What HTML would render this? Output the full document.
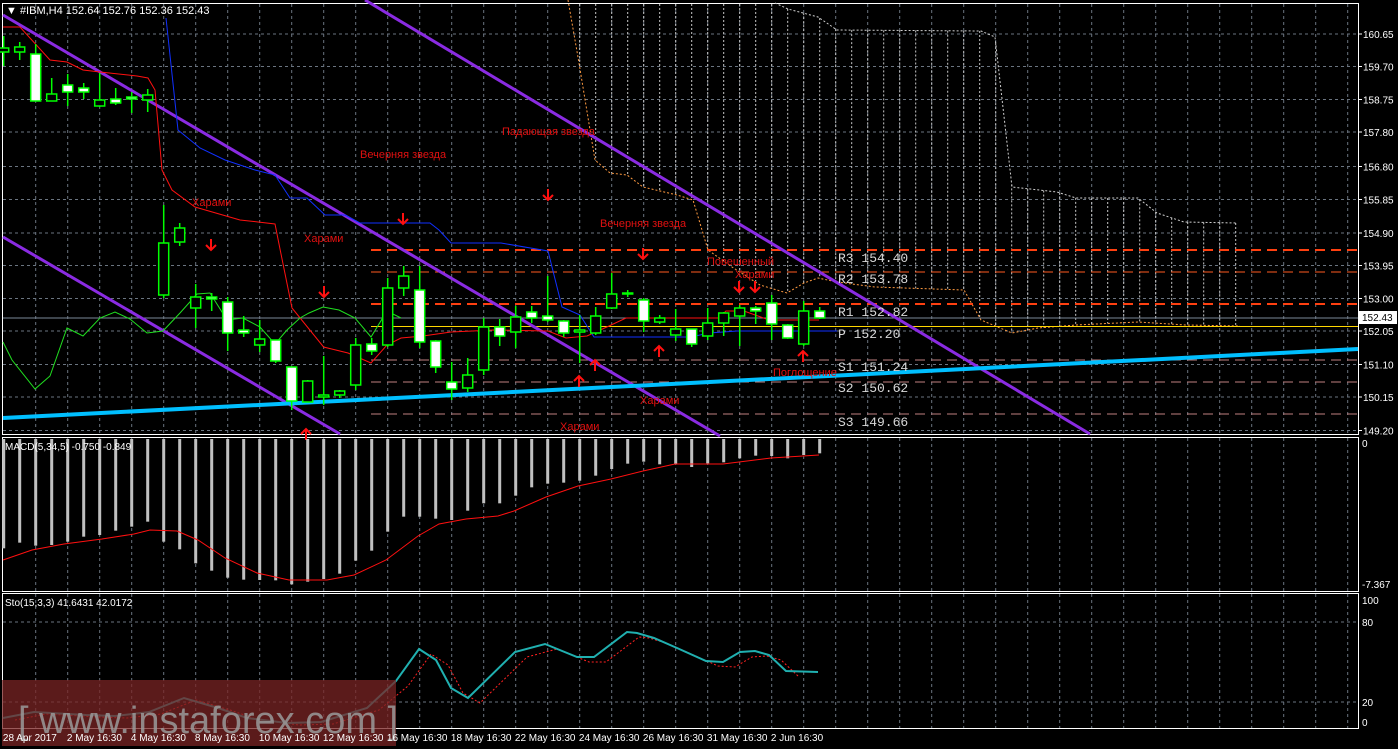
<!DOCTYPE html>
<html><head><meta charset="utf-8"><style>
html,body{margin:0;padding:0;background:#000;width:1398px;height:749px;overflow:hidden}
svg{display:block}
text{font-family:"Liberation Sans","DejaVu Sans",sans-serif}
text.mono{font-family:"Liberation Mono","DejaVu Sans Mono",monospace}
</style></head><body>
<svg id="s" width="1398" height="749" xmlns="http://www.w3.org/2000/svg">
<rect width="1398" height="749" fill="#000"/>
<g id="grid"></g>
<g id="cloud"></g>
<g id="lines"></g>
<g id="candles"></g>
<g id="marks"></g>
<g font-size="11" fill="#e01010">
<text x="360" y="158">Вечерняя звезда</text>
<text x="192" y="206">Харами</text>
<text x="304" y="242">Харами</text>
<text x="502" y="135">Падающая звезда</text>
<text x="600" y="227">Вечерняя звезда</text>
<text x="707" y="265">Повешенный</text>
<text x="735" y="278">Харами</text>
<text x="773" y="376">Поглощение</text>
<text x="640" y="404">Харами</text>
<text x="560" y="430">Харами</text>
</g>
<g font-size="13" fill="#d8d8d8">
<text class="mono" x="838" y="262">R3  154.40</text>
<text class="mono" x="838" y="283">R2  153.78</text>
<text class="mono" x="838" y="316">R1  152.82</text>
<text class="mono" x="838" y="338">P  152.20</text>
<text class="mono" x="838" y="371">S1  151.24</text>
<text class="mono" x="838" y="392">S2  150.62</text>
<text class="mono" x="838" y="426">S3  149.66</text>
</g>
<g font-size="11" fill="#fff">
<text x="6" y="14">▼ #IBM,H4  152.64 152.76 152.36 152.43</text>
<text x="5" y="450" font-size="10">MACD(5,34,5) -0.750 -0.849</text>
<text x="5" y="606" font-size="10">Sto(15,3,3) 41.6431 42.0172</text>
</g>
<g id="axis" font-size="10" fill="#fff"></g>
<rect x="2" y="680" width="394" height="66" fill="#7a2424" fill-opacity="0.75"/>
<text x="18" y="733" font-size="38" fill="#9a9a9a" fill-opacity="0.85">[ www.instaforex.com ]</text>
<g id="dates" font-size="10" fill="#fff"></g>
</svg>
<script>
const NS="http://www.w3.org/2000/svg";
function el(p,t,a){const e=document.createElementNS(NS,t);for(const k in a)e.setAttribute(k,a[k]);document.getElementById(p).appendChild(e);return e;}
const R=1358;
el('grid','rect',{x:2.5,y:3.5,width:R-2,height:431,fill:'none',stroke:'#fff'});
el('grid','line',{x1:2,y1:437.5,x2:R,y2:437.5,stroke:'#fff'});
el('grid','rect',{x:2.5,y:437.5,width:R-2,height:154,fill:'none',stroke:'#fff'});
el('grid','rect',{x:2.5,y:593.5,width:R-2,height:135,fill:'none',stroke:'#fff'});
const gs={stroke:'#6a7480','stroke-dasharray':'3,3'};
const py=[34,66.5,99.5,132,166.5,199.5,233,265.5,298.5,331,364.5,397,430.5];
const pl=['160.65','159.70','158.75','157.80','156.80','155.85','154.90','153.95','153.00','152.05','151.10','150.15','149.20'];
py.forEach((y,i)=>{el('grid','line',Object.assign({x1:3,y1:y,x2:R,y2:y},gs));
 el('axis','line',{x1:R,y1:y,x2:R+4,y2:y,stroke:'#fff'});
 const t=el('axis','text',{x:R+5,y:y+4});t.textContent=pl[i];});
for(let x=35.7;x<R;x+=32){el('grid','line',Object.assign({x1:x,y1:4,x2:x,y2:434},gs));
 el('grid','line',Object.assign({x1:x,y1:438,x2:x,y2:591},gs));
 el('grid','line',Object.assign({x1:x,y1:594,x2:x,y2:728},gs));}
[622,702].forEach(y=>el('grid','line',Object.assign({x1:3,y1:y,x2:R,y2:y},gs)));
[['0',447],['-7.367',588],['100',604],['80',626],['20',706],['0',726]].forEach(a=>{const t=el('axis','text',{x:R+4,y:a[1]});t.textContent=a[0];});
el('axis','rect',{x:R+1,y:311,width:38,height:13,fill:'#fff'});
const pt=el('axis','text',{x:R+4,y:321,fill:'#000'});pt.textContent='152.43';
['28 Apr 2017','2 May 16:30','4 May 16:30','8 May 16:30','10 May 16:30','12 May 16:30','16 May 16:30','18 May 16:30','22 May 16:30','24 May 16:30','26 May 16:30','31 May 16:30','2 Jun 16:30'].forEach((d,i)=>{const t=el('dates','text',{x:2.9+64*i,y:741});t.textContent=d;});
function interp(P,x){for(let i=0;i<P.length-1;i++){if(x>=P[i][0]&&x<=P[i+1][0]){const f=(x-P[i][0])/(P[i+1][0]-P[i][0]);return P[i][1]+f*(P[i+1][1]-P[i][1]);}}return null;}
const org=[[568,0],[579,63],[595,160],[610,173],[627,175],[643,187],[677,195],[693,200],[708,250],[732,267],[760,285],[787,293],[804,283],[818,278],[837,282],[875,287],[964,290],[981,320],[1012,333],[1038,328],[1076,325],[1138,322],[1186,325],[1240,326]];
const wht=[[775,3],[788,9],[818,17],[837,30],[981,31],[995,37],[1012,187],[1057,192],[1076,198],[1138,198],[1157,213],[1184,222],[1237,223],[1237,326]];
for(let x=3.7+16*36;x<=1237;x+=16){const b=interp(org,x);let t=interp(wht,x);if(t===null)t=4;if(b!==null&&b>t)el('cloud','line',{x1:x,y1:t,x2:x,y2:b,stroke:'#c8c8c8','stroke-dasharray':'2,2'});}
function pl2(p,P,a){el(p,'polyline',Object.assign({points:P.map(q=>q.join(',')).join(' '),fill:'none'},a));}
pl2('cloud',org,{stroke:'#ff9a40','stroke-dasharray':'2,2'});
pl2('cloud',wht.slice(0,-1),{stroke:'#d0d0d0','stroke-dasharray':'2,2'});
const L=(y,c,w,d)=>el('lines','line',{x1:371,y1:y,x2:R,y2:y,stroke:c,'stroke-width':w,'stroke-dasharray':d});
L(250,'#ff4010',2,'10,6');L(272,'#ff5a20',1,'10,6');L(304,'#ff4010',2,'10,6');
L(360,'#c08080',1,'10,6');L(382,'#c08080',1,'10,6');L(414,'#c08080',1,'10,6');
el('lines','line',{x1:3,y1:318,x2:R,y2:318,stroke:'#7a8898'});
el('lines','line',{x1:371,y1:326.5,x2:R,y2:326.5,stroke:'#ffd700'});
el('lines','line',{x1:3,y1:15,x2:720,y2:436,stroke:'#8a2be2','stroke-width':3});
el('lines','line',{x1:365,y1:0,x2:1090,y2:434,stroke:'#8a2be2','stroke-width':3});
el('lines','line',{x1:3,y1:237,x2:340,y2:434,stroke:'#8a2be2','stroke-width':3});
el('lines','line',{x1:3,y1:418,x2:R,y2:349,stroke:'#00bfff','stroke-width':4});
pl2('lines',[[3,27],[20,27],[50,60],[67,62],[83,70],[100,72],[137,76],[148,78],[155,90],[162,170],[172,190],[195,207],[240,220],[258,222],[275,224],[280,249],[292,308],[323.6,347],[348,353],[371,363],[387,345],[401,338],[423,336],[451,332],[494,330],[548,331],[566,338],[587,336],[609,326],[626,318],[719,318],[726,311],[744,311],[769,320],[819,320]],{stroke:'#ff1010'});
pl2('lines',[[166,18],[178,130],[200,148],[225,160],[255,170],[275,175],[290,198],[307,198],[325,215],[345,215],[360,223],[430,223],[439,230],[451,243],[501,243],[548,251],[562,307],[580,315],[594,337],[691,337],[709,333],[737,331],[837,331]],{stroke:'#1030ff'});
pl2('lines',[[3,342],[12,360],[35,389],[50,376],[67,328],[83,336],[100,318],[115,312],[130,319],[147,333],[163,331],[180,313],[197,294],[210,293],[227,320],[243,318],[260,327],[275,344],[287,330],[300,318],[309,313],[323,307],[339,310],[355,318],[371,337],[387,311],[401,318]],{stroke:'#20e020'});
const C=[[48,52,36,66,0],[47,52,42,60,0],[54,101,44,101,1],[94,101,78,101,0],[85,92,74,106,1],[88,92,83,99,1],[100,106,73,107,0],[99,103,88,105,1],[97,99,92,113,1],[95,100,89,112,0],[243,295,205,298,0],[228,242,223,246,0],[297,308,284,328,0],[297,299,293,311,1],[302,333,297,351,1],[330,333,316,337,1],[339,345,320,352,0],[340,361,340,363,1],[367,401,367,410,1],[381,402,380,402,0],[395,397,356,405,0],[391,395,390,398,0],[345,385,338,390,0],[344,351,338,355,1],[288,345,278,347,0],[276,288,266,296,0],[290,342,266,348,1],[341,367,340,373,1],[382,389,362,400,1],[375,388,358,392,0],[327,370,318,375,0],[327,336,319,346,1],[317,332,306,348,0],[312,318,306,323,1],[316,320,276,322,1],[321,333,320,337,1],[330,332,315,363,0],[316,333,307,335,0],[294,308,273,309,0],[293,294,290,297,0],[300,321,298,332,1],[318,322,315,324,0],[329,335,309,341,0],[329,344,329,347,1],[323,336,308,340,0],[313,323,312,336,0],[308,316,305,346,0],[308,311,306,324,1],[303,324,295,340,1],[325,338,324,339,1],[311,344,301,346,0],[311,318,307,319,1]];
C.forEach((c,i)=>{const x=3.7+16*i;
 el('candles','line',{x1:x,y1:c[2],x2:x,y2:c[3],stroke:'#00ff00','stroke-width':1.5});
 el('candles','rect',{x:x-5,y:c[0],width:10,height:Math.max(1,c[1]-c[0]),fill:c[4]?'#fff':'#000',stroke:'#00ff00','stroke-width':1.5});});
function arrow(x,y,down){const d=down?1:-1;
 el('marks','path',{d:`M${x} ${y-6*d} L${x} ${y+5*d} M${x-5} ${y} L${x} ${y+5*d} L${x+5} ${y}`,stroke:'#ff1010','stroke-width':2,fill:'none'});}
[[211,245],[324,292],[403,219],[548,195],[643,254],[739,287],[755,287]].forEach(a=>arrow(a[0],a[1],1));
[[579,381],[595,365],[659,351],[803,356],[306,434]].forEach(a=>arrow(a[0],a[1],0));
const mb=[355,338,347,345,335,320,315,302,290,275,335,358,400,422,443,449,450,451,463,455,447,431,392,362,305,260,260,266,270,242,220,220,197,172,161,158,152,137,117,101,95,103,103,111,100,97,85,77,78,85,75,70];
mb.forEach((b,i)=>{const x=3.7+16*i;el('marks','rect',{x:x-1.5,y:439,width:3,height:b/3-9,fill:'#c0c0c0'});});
pl2('marks',[[3,560],[32,550],[64,544],[102,539],[134,534],[150,530],[177,531],[198,540],[225,558],[257,573],[289,580],[327,580],[354,575],[386,560],[418,536],[439,524],[466,519],[498,516],[514,511],[546,497],[578,486],[611,479],[643,471],[675,464],[723,464],[771,458],[819,455]],{stroke:'#ff1010'});
const st=[[3,718],[34,712],[86,715],[115,716],[149,712],[184,698],[218,708],[247,718],[287,723],[321,722],[367,708],[396,681],[419,649],[436,660],[451,688],[468,698],[515,652],[545,644],[577,657],[594,657],[627,632],[637,633],[654,638],[677,648],[706,661],[723,662],[740,652],[755,651],[769,655],[786,671],[818,672]];
pl2('marks',st.map(p=>[p[0]+12,p[1]+(p[0]>380&&p[0]<800?5:2)]).filter(p=>p[0]<=818),{stroke:'#ff2020','stroke-dasharray':'2,2'});
pl2('marks',st,{stroke:'#20b0b0','stroke-width':2});
</script>
</body></html>
